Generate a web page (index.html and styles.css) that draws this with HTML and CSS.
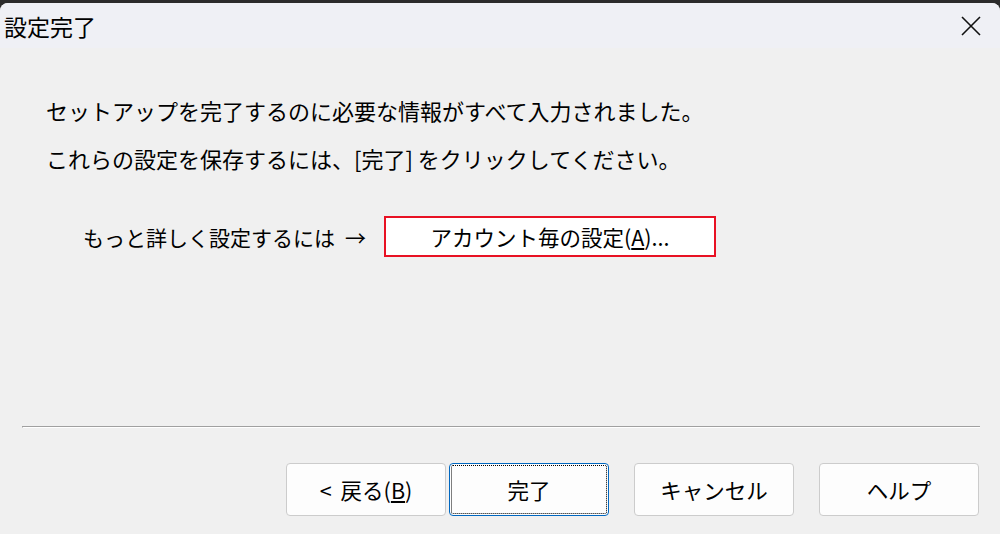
FILE: index.html
```html
<!DOCTYPE html>
<html lang="ja">
<head>
    <meta charset="UTF-8">
    <title>設定完了</title>
    <link rel="stylesheet" href="styles.css">
</head>
<body>
    <div class="window">
        <!-- Title bar -->
        <div class="titlebar">
            <span class="title">設定完了</span>
            <svg class="close" width="20" height="20" viewBox="0 0 20 20">
                <path d="M1 1 L19 19 M19 1 L1 19" stroke="#111" stroke-width="1.6" fill="none"/>
            </svg>
        </div>

        <div class="content">
            <p class="line">セットアップを完了するのに必要な情報がすべて入力されました。</p>
            <p class="line">これらの設定を保存するには、[完了] をクリックしてください。</p>

            <div class="detail-row">
                <span class="detail-label">もっと詳しく設定するには<span class="arrow">&rarr;</span></span>
                <button class="detail-btn">アカウント毎の設定(<u>A</u>)...</button>
            </div>
        </div>

        <!-- Footer buttons -->
        <div class="footer">
            <div class="separator"></div>
            <div class="buttons">
                <button class="btn back"><span class="lt">&lt;</span>戻る(<u>B</u>)</button>
                <button class="btn finish">完了</button>
                <button class="btn cancel">キャンセル</button>
                <button class="btn help">ヘルプ</button>
            </div>
        </div>
    </div>
</body>
</html>
```

FILE: styles.css
```css
/* Reset */
* {
    box-sizing: border-box;
    margin: 0;
    padding: 0;
}

html, body {
    width: 1000px;
    height: 534px;
    overflow: hidden;
}

body {
    background-color: #2b2b2b;
    font-family: "Noto Sans CJK JP", "Noto Sans", sans-serif;
    color: #000;
    padding-top: 3px;
}

.window {
    height: 531px;
    display: flex;
    flex-direction: column;
    background-color: #f0f0f0;
    border-radius: 8px 8px 0 0;
    overflow: hidden;
}

/* Title bar */
.titlebar {
    height: 45px;
    display: flex;
    align-items: center;
    justify-content: space-between;
    background-color: #eff0f5;
    padding: 0 19px 0 4px;
}

.title {
    font-size: 23px;
    line-height: 1;
    margin-top: 1px;
}

.close {
    display: block;
    margin-top: 1px;
}

/* Main text */
.content {
    flex: 1;
    padding: 38px 0 0 46px;
}

.line {
    font-size: 22px;
    line-height: 48px;
}

.detail-row {
    display: flex;
    align-items: center;
    margin-top: 34px;
    padding-left: 37px;
}

.detail-label {
    font-size: 21px;
}

.detail-label .arrow {
    margin-left: 10px;
}

.detail-btn {
    width: 332px;
    height: 41px;
    margin-left: 18px;
    border: 2px solid #e81123;
    background-color: #fff;
    font-family: inherit;
    font-size: 21.5px;
    color: #000;
}

/* Footer */
.separator {
    margin: 0 20px 0 22px;
    border-top: 1px solid #a0a0a0;
    border-bottom: 1px solid #fff;
    border-left: 1px solid #a0a0a0;
    height: 2px;
}

.buttons {
    display: flex;
    justify-content: flex-end;
    padding: 35px 21px 18px 0;
}

.btn {
    width: 160px;
    height: 53px;
    border: 1px solid #cccccc;
    border-radius: 4px;
    background-color: #fdfdfd;
    font-family: inherit;
    font-size: 21.5px;
    color: #000;
}

.btn .lt {
    margin-right: 9px;
}

.btn.finish {
    margin-left: 3px;
    border: 1px solid #0067c0;
    outline: 1px dotted #000;
    outline-offset: -3px;
}

.btn.cancel,
.btn.help {
    margin-left: 25px;
}
```
